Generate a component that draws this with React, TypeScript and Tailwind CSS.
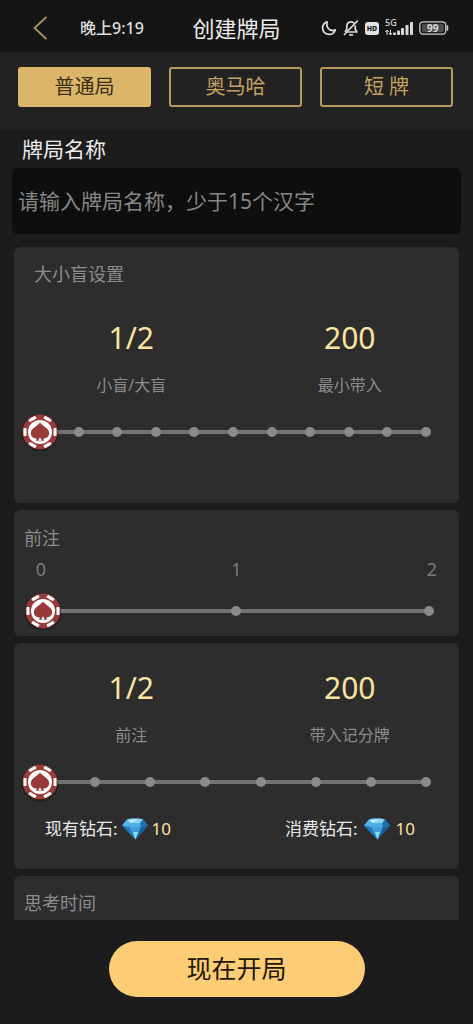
import React, { useState } from 'react';

const TABS = ['普通局', '奥马哈', '短 牌'];

const MoonIcon: React.FC = () => (
  <svg className="h-4 w-4" viewBox="0 0 16 16" fill="none" stroke="#d9d9d9" strokeWidth="1.8" strokeLinejoin="round">
    <path d="M6.2 1.8C3.6 2.6 1.6 5 1.6 8c0 3.6 2.9 6.4 6.5 6.4 2.9 0 5.4-1.900 6.2-4.500-.8.4-1.600.6-2.500.6C8.500 10.500 5.800 7.900 5.800 4.600c0-1 .1-1.900.4-2.800z" />
  </svg>
);

const BellOffIcon: React.FC = () => (
  <svg className="h-4 w-4" viewBox="0 0 16 16" fill="none" stroke="#d9d9d9" strokeWidth="1.7" strokeLinecap="round" strokeLinejoin="round">
    <path d="M11.200 3.200C10.400 2.300 9.300 1.900 8 1.900 5.400 1.900 3.800 3.700 3.800 6v3L2.400 11.400" />
    <path d="M12.200 6v3l1.700 3H5" />
    <path d="M6.800 14.800h2.600" />
    <path d="M14.300 1.200 1.400 14.500" />
  </svg>
);

const SignalIcon: React.FC = () => (
  <svg className="h-6 w-7" viewBox="0 -2 28 24" fill="#d9d9d9">
    <text x="0" y="8" fontSize="9" fontWeight="500" fontFamily="Noto Sans, sans-serif">5G</text>
    <path d="M2 12v5M.5 14 2 12l1.500 2M5.500 12v5M4 15l1.500 2L7 15" fill="none" stroke="#d9d9d9" strokeWidth="1" />
    <rect x="8" y="14.500" width="3" height="2.500" rx="0.800" />
    <rect x="12" y="12.500" width="3" height="4.500" rx="0.800" />
    <rect x="16" y="10" width="3" height="7" rx="0.800" />
    <rect x="20.500" y="7" width="3" height="10" rx="0.800" />
    <rect x="25" y="4" width="3" height="13" rx="0.800" />
  </svg>
);

const BatteryIcon: React.FC = () => (
  <svg className="h-3.5 w-[30px]" viewBox="0 0 30 14">
    <rect x="0.800" y="0.800" width="26" height="12.400" rx="3.500" fill="none" stroke="#cfcfcf" strokeWidth="1.300" />
    <rect x="2.800" y="2.800" width="22" height="8.400" rx="2" fill="#4d4d4d" />
    <path d="M28.500 5v4" stroke="#cfcfcf" strokeWidth="1.500" strokeLinecap="round" />
    <text x="13.800" y="10.500" fontSize="10" fontWeight="700" textAnchor="middle" fill="#dcdcdc" fontFamily="Noto Sans, sans-serif">99</text>
  </svg>
);

const ChipIcon: React.FC = () => (
  <svg className="h-9 w-9 drop-shadow-[0_1px_1px_rgba(0,0,0,0.6)]" viewBox="0 0 36 36">
    <circle cx="18" cy="18" r="17.500" fill="#983a37" />
    {[0, 60, 120, 180, 240, 300].map((angle) => (
      <rect key={angle} x="31.500" y="14" width="3" height="8" rx="0.800" fill="#fff" transform={`rotate(${angle} 18 18)`} />
    ))}
    <circle cx="18" cy="18" r="12" fill="#fff" />
    <path
      d="M18 8.400c2 3.200 9.200 5.800 9.200 10.600 0 3.200-2.400 5.400-5.200 5.400h-.8l.8 2.200c-2.500 1-5.500 1-8 0l.8-2.200h-.8c-2.800 0-5.200-2.200-5.200-5.400 0-4.800 7.200-7.400 9.200-10.600z"
      fill="#983a37"
    />
    <path d="M18 23.200l1.900 3.600h-3.800z" fill="#fff" />
  </svg>
);

const DiamondIcon: React.FC = () => (
  <svg className="h-[22px] w-[26px]" viewBox="0 0 26 22">
    <path d="M5 1.500C9 .3 17 .3 21 1.500L26 7.500 13.500 21.500 0 7.500z" fill="#2f93cf" />
    <path d="M5 1.500C9 .3 17 .3 21 1.500L18 5.500H8z" fill="#8bd6f3" />
    <path d="M5 1.500 0 7.500l7 1.500 1-3.500z" fill="#55b4e4" />
    <path d="M21 1.500l5 6-7 1.500-1-3.500z" fill="#1c6fae" />
    <path d="M8 5.500h10l1 3.500c-4 1-8 1-12 0z" fill="#4aaee6" />
    <path d="M7 9c4 1 8 1 12 0l-5.500 12.500z" fill="#3f9ddb" />
    <path d="M0 7.500 7 9l6.500 12.500z" fill="#1f78bd" />
    <path d="M26 7.500 19 9l-5.500 12.500z" fill="#175f9f" />
    <path d="M11 14 13.500 21l2.500-7z" fill="#8fdcf5" />
    <path d="M6 3c3-1.300 6-1.500 9-1.300L9 4.500z" fill="#d3f2fb" />
  </svg>
);

interface StepSliderProps {
  label: string;
  steps: number;
  className: string;
}

const StepSlider: React.FC<StepSliderProps> = ({ label, steps, className }) => {
  const [value, setValue] = useState(0);

  return (
    <div className={`relative flex h-9 items-center ${className}`}>
      <div className="h-1 w-full bg-[#727272]" />
      <div className="absolute -inset-x-[5px] flex justify-between">
        {Array.from({ length: steps + 1 }, (_, i) => (
          <span key={i} className="h-2.5 w-2.5 rounded-full bg-[#8a8a8a]" />
        ))}
      </div>
      <div className="absolute -translate-x-1/2" style={{ left: `${(value / steps) * 100}%` }}>
        <ChipIcon />
      </div>
      <input
        type="range"
        aria-label={label}
        min={0}
        max={steps}
        value={value}
        onChange={(e) => setValue(Number(e.target.value))}
        className="absolute -inset-x-4 h-9 cursor-pointer opacity-0"
      />
    </div>
  );
};

interface StatProps {
  value: string;
  label: string;
}

const Stat: React.FC<StatProps> = ({ value, label }) => (
  <div className="flex flex-col items-center gap-[15px]">
    <span className="text-[30px] leading-10 text-[#fbe3a2]">{value}</span>
    <span className="text-base leading-6 text-[#8c8c8c]">{label}</span>
  </div>
);

interface DiamondCountProps extends StatProps {
  className: string;
}

const DiamondCount: React.FC<DiamondCountProps> = ({ value, label, className }) => (
  <div className={`flex items-center text-[17px] leading-6 ${className}`}>
    <span className="text-[#e8e8e8]">{label}</span>
    <DiamondIcon />
    <span className="text-[#fbe3a2]">{value}</span>
  </div>
);

const App: React.FC = () => {
  const [activeTab, setActiveTab] = useState(0);
  const [name, setName] = useState('');

  return (
    <div className="flex h-screen flex-col bg-[#1c1c1c] font-['Noto_Sans','Noto_Sans_CJK_SC',sans-serif]">
      {/* Header */}
      <header className="grid h-[52px] shrink-0 grid-cols-[minmax(0,1fr)_auto_minmax(0,1fr)] items-center bg-[#151515] px-6 pt-1">
        <div className="flex items-center gap-8 pl-2">
          <button aria-label="返回" className="cursor-pointer">
            <svg className="h-6 w-4" viewBox="0 0 16 24" fill="none" stroke="#b3955a" strokeWidth="1.800">
              <path d="M14.500 0.800 2.500 12l12 11.200" />
            </svg>
          </button>
          <span className="text-base leading-6 font-medium whitespace-nowrap text-[#dedede]">晚上9:19</span>
        </div>
        <h1 className="text-[22px] leading-8 text-[#ececec]">创建牌局</h1>
        <div className="flex items-center justify-end gap-1.5">
          <MoonIcon />
          <BellOffIcon />
          <svg className="h-[13px] w-3.5" viewBox="0 0 14 13">
            <rect width="14" height="13" rx="3" fill="#e2e2e2" />
            <text x="7" y="9" fontSize="7" fontWeight="800" textAnchor="middle" fill="#151515" fontFamily="Noto Sans, sans-serif">HD</text>
          </svg>
          <SignalIcon />
          <BatteryIcon />
        </div>
      </header>

      {/* Game type */}
      <nav className="grid h-[78px] shrink-0 grid-cols-3 gap-[18px] bg-[#222222] pt-[15px] pr-5 pl-[18px]">
        {TABS.map((tab, index) => (
          <button
            key={tab}
            onClick={() => setActiveTab(index)}
            className={`h-10 cursor-pointer rounded-[3px] border-2 text-xl leading-7 ${
              activeTab === index ? 'border-[#dab56a] bg-[#dab56a] text-[#3d2f14]' : 'border-[#b89a5e] text-[#c4a261]'
            }`}
          >
            {tab}
          </button>
        ))}
      </nav>

      <main className="min-h-0 flex-1 overflow-y-auto [scrollbar-width:none]">
        <div className="px-3">
          <label htmlFor="game-name" className="block pl-2.5 text-[21px] leading-[38px] text-[#ececec]">
            牌局名称
          </label>
          <input
            id="game-name"
            type="text"
            maxLength={15}
            value={name}
            onChange={(e) => setName(e.target.value)}
            placeholder="请输入牌局名称，少于15个汉字"
            className="h-[66px] w-full rounded-md bg-[#0e0e0e] px-1.5 text-[21px] text-[#ececec] outline-none placeholder:text-[#868686]"
          />
        </div>

        <div className="flex flex-col gap-[7px] px-3.5 pt-[13px]">
          {/* Blinds */}
          <section className="rounded-md bg-[#2d2d2d] pt-4 pb-[53px]">
            <h2 className="pl-5 text-lg leading-[22px] text-[#8c8c8c]">大小盲设置</h2>
            <div className="mt-[33px] grid grid-cols-2 pl-2">
              <Stat value="1/2" label="小盲/大盲" />
              <Stat value="200" label="最小带入" />
            </div>
            <StepSlider label="大小盲设置" steps={10} className="mt-[17px] mr-[33px] ml-[26px]" />
          </section>

          {/* Ante */}
          <section className="rounded-md bg-[#2d2d2d] pt-[17px] pb-[7px]">
            <h2 className="pl-2.5 text-lg leading-[22px] text-[#8c8c8c]">前注</h2>
            <div className="mt-2.5 flex justify-between px-[17px] text-lg leading-5 text-[#7c7c7c]">
              <span className="w-5 text-center">0</span>
              <span className="w-5 text-center">1</span>
              <span className="w-5 text-center">2</span>
            </div>
            <StepSlider label="前注" steps={2} className="mt-3.5 mr-[30px] ml-[29px]" />
          </section>

          {/* Buy-in */}
          <section className="rounded-md bg-[#2d2d2d] pt-[25px] pb-7">
            <div className="grid grid-cols-2 pl-2">
              <Stat value="1/2" label="前注" />
              <Stat value="200" label="带入记分牌" />
            </div>
            <StepSlider label="带入记分牌" steps={7} className="mt-[17px] mr-[33px] ml-[26px]" />
            <div className="mt-[17px] flex justify-between pr-11 pl-[31px]">
              <DiamondCount label="现有钻石:" value="10" className="gap-1" />
              <DiamondCount label="消费钻石:" value="10" className="gap-1.5" />
            </div>
          </section>

          <section className="rounded-t-md bg-[#2d2d2d] pt-4 pb-16">
            <h2 className="pl-2.5 text-lg leading-[22px] text-[#8c8c8c]">思考时间</h2>
          </section>
        </div>
      </main>

      <footer className="flex h-[104px] shrink-0 justify-center bg-[#1c1c1c] pt-[21px]">
        <button className="h-14 w-64 cursor-pointer rounded-full bg-[#fccd75] text-[25px] text-[#1e1608]">现在开局</button>
      </footer>
    </div>
  );
};

export default App;
